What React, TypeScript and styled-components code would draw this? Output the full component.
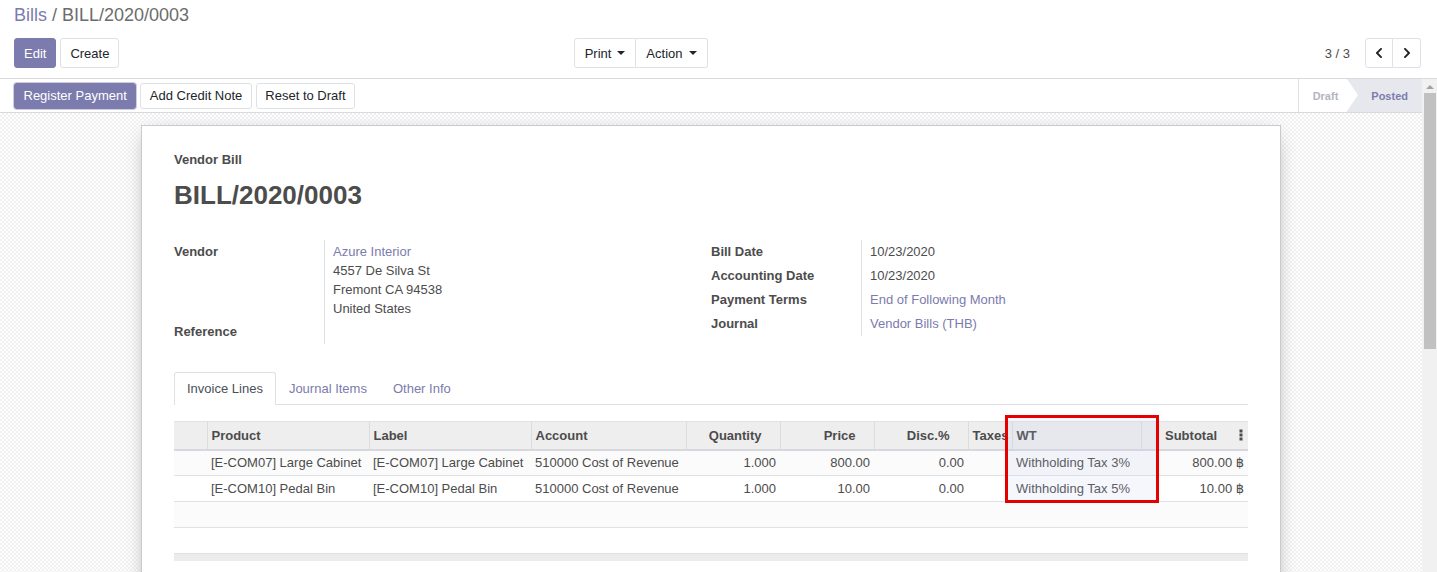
import React from 'react';
import styled, { createGlobalStyle } from 'styled-components';
import { FaChevronLeft, FaChevronRight } from 'react-icons/fa';

const GlobalStyle = createGlobalStyle`
  html, body { margin: 0; padding: 0; }
  body {
    font-family: "Liberation Sans", Arial, "DejaVu Sans", sans-serif;
    font-size: 13px;
    color: #4c4c4c;
    background: #fff;
  }
  * { box-sizing: border-box; }
`;

const Page = styled.div`
  height: 572px;
  display: flex;
  flex-direction: column;
  overflow: hidden;
`;

const ControlPanel = styled.div`
  flex: none;
  padding: 4px 16px 10px 14px;
  border-bottom: 1px solid #d9d9de;
`;

const Breadcrumb = styled.div`
  font-size: 18px;
  line-height: 22px;
  color: #6c6c6c;
`;

const Crumb = styled.a`
  color: #7c7bad;
  text-decoration: none;
`;

const CpRow = styled.div`
  margin-top: 12px;
  display: grid;
  grid-template-columns: 1fr 1fr;
  align-items: center;
`;

const CpLeft = styled.div`
  display: flex;
  justify-content: space-between;
  align-items: center;
  padding-right: 10px;
`;

const CpRight = styled.div`
  display: flex;
  justify-content: flex-end;
  align-items: center;
`;

const BtnRow = styled.div<{ $gap?: number }>`
  display: flex;
  align-items: center;
  gap: ${p => p.$gap ?? 4}px;
`;

const Btn = styled.button<{ $primary?: boolean; $small?: boolean }>`
  font-family: inherit;
  font-size: 13px;
  height: ${p => (p.$small ? 26 : 30)}px;
  padding: 0 ${p => (p.$small ? 8.5 : 9)}px;
  border: 1px solid ${p => (p.$primary ? '#7c7bad' : '#dee2e6')};
  background: ${p => (p.$primary ? '#7c7bad' : '#fff')};
  color: ${p => (p.$primary ? '#fff' : '#212529')};
  border-radius: 3px;
  line-height: 1;
  display: inline-flex;
  align-items: center;
  white-space: nowrap;
  box-shadow: ${p => (p.$primary && p.$small ? '0 0 0 1px #cfcde2' : 'none')};
`;

const Group = styled.div`
  display: flex;
  & > button { border-radius: 0; }
  & > button:first-child { border-radius: 3px 0 0 3px; }
  & > button:last-child { border-radius: 0 3px 3px 0; border-left: none; }
`;

const DropBtn = styled(Btn)`
  padding: 0 10px;
`;

const Caret = styled.span`
  display: inline-block;
  margin-left: 6px;
  width: 0;
  height: 0;
  border-top: 4px solid #212529;
  border-left: 4px solid transparent;
  border-right: 4px solid transparent;
`;

const PagerValue = styled.span`
  margin-right: 15px;
  color: #4c4c4c;
`;

const PagerBtn = styled(Btn)`
  width: 28px;
  justify-content: center;
  padding: 0;
  color: #212529;
`;

const Body = styled.div`
  flex: 1;
  min-height: 0;
  display: flex;
`;

const Content = styled.div`
  flex: 1;
  min-width: 0;
  overflow: hidden;
`;

const ScrollBar = styled.div`
  flex: none;
  width: 15px;
  background: #f1f1f1;
  display: flex;
  flex-direction: column;
  align-items: center;
`;

const ScrollArrow = styled.div`
  height: 15px;
  width: 15px;
  display: flex;
  align-items: center;
  justify-content: center;
  &::before {
    content: '';
    width: 0;
    height: 0;
    border-bottom: 4px solid #a3a3a3;
    border-left: 4px solid transparent;
    border-right: 4px solid transparent;
  }
`;

const ScrollThumb = styled.div`
  margin-top: -1px;
  margin-left: 1px;
  width: 12px;
  height: 256px;
  background: #c1c1c1;
`;

const StatusBar = styled.div`
  height: 34px;
  display: flex;
  justify-content: space-between;
  align-items: stretch;
  border-bottom: 1px solid #d9d9de;
  background: #fff;
  padding-left: 14px;
`;

const StatusSteps = styled.div`
  display: flex;
  align-items: stretch;
`;

const Step = styled.div<{ $active?: boolean }>`
  position: relative;
  display: flex;
  align-items: center;
  font-weight: bold;
  font-size: 11px;
  padding: ${p => (p.$active ? '0 14px 0 24px' : '0 9px 0 14px')};
  color: ${p => (p.$active ? '#7c7bad' : '#b3b6c0')};
  background: ${p => (p.$active ? '#e7e8ee' : '#fff')};
  border-left: ${p => (p.$active ? 'none' : '1px solid #dee2e6')};
  &::after {
    content: '';
    display: ${p => (p.$active ? 'none' : 'block')};
    position: absolute;
    right: -11px;
    top: 0;
    width: 0;
    height: 0;
    border-left: 11px solid #fff;
    border-top: 16.5px solid transparent;
    border-bottom: 16.5px solid transparent;
    z-index: 1;
  }
`;

const SheetBg = styled.div`
  padding: 12px 0 24px;
  background-color: #fbfbfb;
  background-image: repeating-conic-gradient(#f1f1f1 0 25%, #fdfdfd 0 50%);
  background-size: 4px 4px;
`;

const Sheet = styled.div`
  width: 1140px;
  min-height: 820px;
  margin: 0 auto;
  background: #fff;
  border: 1px solid #c9c8d3;
  box-shadow: 0 5px 20px -8px rgba(0, 0, 0, 0.45);
  padding: 24px 32px;
`;

const Overline = styled.div`
  font-weight: bold;
  line-height: 20px;
`;

const Title = styled.h1`
  margin: 10px 0 0;
  font-size: 26px;
  line-height: 31px;
  font-weight: bold;
  color: #4c4c4c;
`;

const Groups = styled.div`
  margin-top: 29px;
  display: grid;
  grid-template-columns: 1fr 1fr;
`;

const FieldGroup = styled.div`
  display: grid;
  grid-template-columns: 150px 1fr;
  align-content: start;
`;

const Label = styled.div`
  font-weight: bold;
  line-height: 20px;
  padding: 2px 0;
`;

const Value = styled.div`
  border-left: 1px solid #dee2e6;
  padding: 2px 8px;
  line-height: 20px;
`;

const Link = styled.a`
  color: #7c7bad;
  text-decoration: none;
`;

const AddressLine = styled.div`
  line-height: 19px;
`;

const Tabs = styled.div`
  margin-top: 28px;
  display: flex;
  border-bottom: 1px solid #dee2e6;
  height: 33px;
`;

const Tab = styled.div<{ $active?: boolean }>`
  padding: 0 12px;
  line-height: 31px;
  border: 1px solid ${p => (p.$active ? '#dee2e6' : 'transparent')};
  border-bottom: none;
  border-radius: 3px 3px 0 0;
  background: ${p => (p.$active ? '#fff' : 'transparent')};
  color: ${p => (p.$active ? '#495057' : '#7c7bad')};
  margin-bottom: ${p => (p.$active ? '-1px' : '0')};
  height: ${p => (p.$active ? '33px' : '32px')};
`;

const TableWrap = styled.div`
  position: relative;
  margin-top: 16px;
`;

const Table = styled.table`
  width: 100%;
  border-collapse: collapse;
  table-layout: fixed;
`;

const Th = styled.th<{ $num?: boolean; $first?: boolean }>`
  background: #eeeeee;
  border-top: 1px solid #dee2e6;
  border-bottom: 2px solid #d7d8de;
  border-left: ${p => (p.$first ? 'none' : '1px solid #dcdcdf')};
  padding: 0 ${p => (p.$num ? 18 : 4)}px 0 4px;
  height: 28px;
  text-align: ${p => (p.$num ? 'right' : 'left')};
  font-weight: bold;
  white-space: nowrap;
  overflow: hidden;
  text-overflow: clip;
  color: #4c4c4c;
`;

const LastTh = styled(Th)`
  padding-right: 5px;
`;

const Tr = styled.tr<{ $striped?: boolean }>`
  background: ${p => (p.$striped ? '#fbfbfb' : '#fff')};
`;

const Td = styled.td<{ $num?: boolean }>`
  height: 26px;
  padding: 0 4px;
  border-bottom: 1px solid #dee2e6;
  text-align: ${p => (p.$num ? 'right' : 'left')};
  white-space: nowrap;
  overflow: hidden;
  color: #4c4c4c;
`;

const FootTd = styled.td`
  height: 7px;
  background: #ececec;
  border-top: 1px solid #dcdce2;
  padding: 0;
`;

const DotsIcon = styled.svg`
  display: inline-block;
  margin-left: 22px;
  vertical-align: -1px;
`;

const Highlight = styled.div`
  position: absolute;
  left: 831px;
  top: -6px;
  width: 154px;
  height: 88px;
  border: 3px solid #e50000;
  background: rgba(190, 198, 240, 0.15);
  pointer-events: none;
`;

const cols = [33, 162, 162, 155, 94, 94, 94, 44, 129, 107];

const lines = [
  { product: '[E-COM07] Large Cabinet', label: '[E-COM07] Large Cabinet', account: '510000 Cost of Revenue', qty: '1.000', price: '800.00', disc: '0.00', wt: 'Withholding Tax 3%', subtotal: '800.00 ฿' },
  { product: '[E-COM10] Pedal Bin', label: '[E-COM10] Pedal Bin', account: '510000 Cost of Revenue', qty: '1.000', price: '10.00', disc: '0.00', wt: 'Withholding Tax 5%', subtotal: '10.00 ฿' },
];

export default function App() {
  return (
    <Page>
      <GlobalStyle />
      <ControlPanel>
        <Breadcrumb>
          <Crumb>Bills</Crumb> / BILL/2020/0003
        </Breadcrumb>
        <CpRow>
          <CpLeft>
            <BtnRow>
              <Btn $primary>Edit</Btn>
              <Btn>Create</Btn>
            </BtnRow>
            <Group>
              <DropBtn>Print<Caret /></DropBtn>
              <DropBtn>Action<Caret /></DropBtn>
            </Group>
          </CpLeft>
          <CpRight>
            <PagerValue>3 / 3</PagerValue>
            <Group>
              <PagerBtn><FaChevronLeft size={12} /></PagerBtn>
              <PagerBtn><FaChevronRight size={12} /></PagerBtn>
            </Group>
          </CpRight>
        </CpRow>
      </ControlPanel>
      <Body>
        <Content>
          <StatusBar>
            <BtnRow>
              <Btn $primary $small>Register Payment</Btn>
              <Btn $small>Add Credit Note</Btn>
              <Btn $small>Reset to Draft</Btn>
            </BtnRow>
            <StatusSteps>
              <Step>Draft</Step>
              <Step $active>Posted</Step>
            </StatusSteps>
          </StatusBar>
          <SheetBg>
            <Sheet>
              <Overline>Vendor Bill</Overline>
              <Title>BILL/2020/0003</Title>
              <Groups>
                <FieldGroup>
                  <Label>Vendor</Label>
                  <Value>
                    <AddressLine><Link>Azure Interior</Link></AddressLine>
                    <AddressLine>4557 De Silva St</AddressLine>
                    <AddressLine>Fremont CA 94538</AddressLine>
                    <AddressLine>United States</AddressLine>
                  </Value>
                  <Label>Reference</Label>
                  <Value>&nbsp;</Value>
                </FieldGroup>
                <FieldGroup>
                  <Label>Bill Date</Label>
                  <Value>10/23/2020</Value>
                  <Label>Accounting Date</Label>
                  <Value>10/23/2020</Value>
                  <Label>Payment Terms</Label>
                  <Value><Link>End of Following Month</Link></Value>
                  <Label>Journal</Label>
                  <Value><Link>Vendor Bills (THB)</Link></Value>
                </FieldGroup>
              </Groups>
              <Tabs>
                <Tab $active>Invoice Lines</Tab>
                <Tab>Journal Items</Tab>
                <Tab>Other Info</Tab>
              </Tabs>
              <TableWrap>
                <Table>
                  <colgroup>
                    {cols.map((w, i) => <col key={i} style={{ width: w }} />)}
                  </colgroup>
                  <thead>
                    <tr>
                      <Th $first></Th>
                      <Th>Product</Th>
                      <Th>Label</Th>
                      <Th>Account</Th>
                      <Th $num>Quantity</Th>
                      <Th $num>Price</Th>
                      <Th $num>Disc.%</Th>
                      <Th>Taxes</Th>
                      <Th>WT</Th>
                      <LastTh $num>
                        Subtotal
                        <DotsIcon width="4" height="12" viewBox="0 0 4 12">
                          <rect x="0.5" y="0.5" width="3" height="3" fill="#4c4c4c" />
                          <rect x="0.5" y="4.5" width="3" height="3" fill="#4c4c4c" />
                          <rect x="0.5" y="8.5" width="3" height="3" fill="#4c4c4c" />
                        </DotsIcon>
                      </LastTh>
                    </tr>
                  </thead>
                  <tbody>
                    {lines.map((l, i) => (
                      <Tr key={i} $striped={i % 2 === 0}>
                        <Td></Td>
                        <Td>{l.product}</Td>
                        <Td>{l.label}</Td>
                        <Td>{l.account}</Td>
                        <Td $num>{l.qty}</Td>
                        <Td $num>{l.price}</Td>
                        <Td $num>{l.disc}</Td>
                        <Td></Td>
                        <Td>{l.wt}</Td>
                        <Td $num>{l.subtotal}</Td>
                      </Tr>
                    ))}
                    <Tr $striped><Td colSpan={10}></Td></Tr>
                    <Tr><Td colSpan={10}></Td></Tr>
                  </tbody>
                  <tfoot>
                    <tr><FootTd colSpan={10}></FootTd></tr>
                  </tfoot>
                </Table>
                <Highlight />
              </TableWrap>
            </Sheet>
          </SheetBg>
        </Content>
        <ScrollBar>
          <ScrollArrow />
          <ScrollThumb />
        </ScrollBar>
      </Body>
    </Page>
  );
}
